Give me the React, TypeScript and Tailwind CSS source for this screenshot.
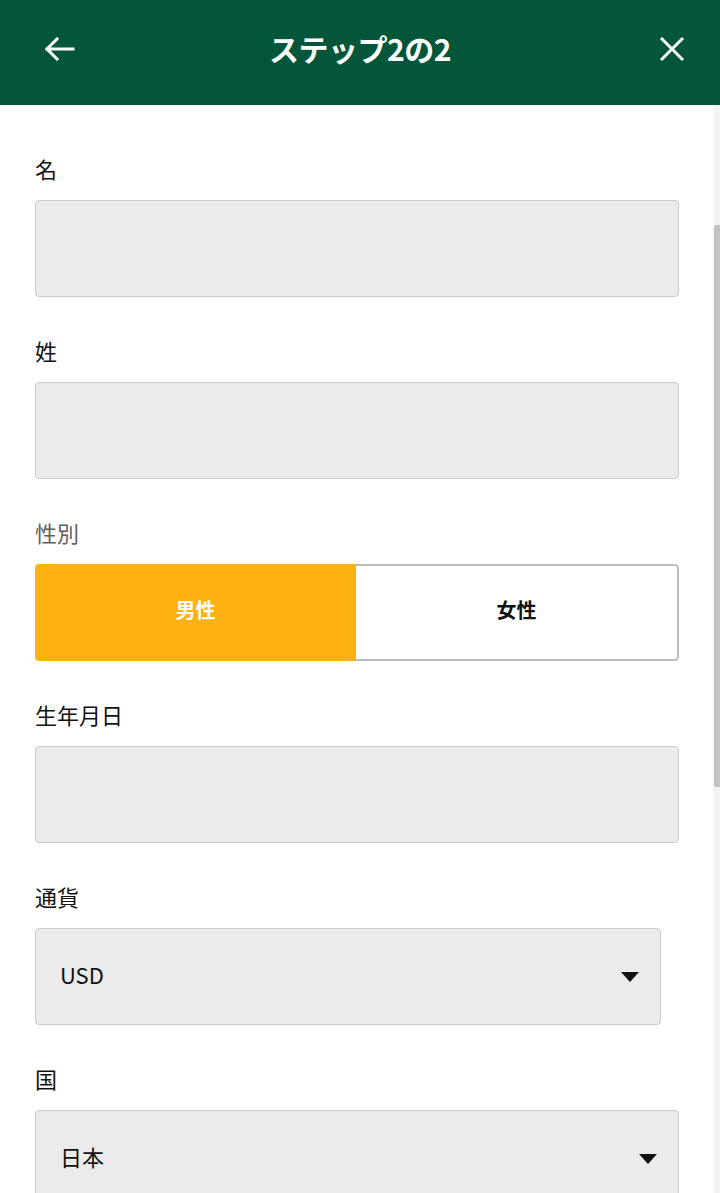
import type { ReactNode } from 'react';

const font = { fontFamily: '"Noto Sans CJK JP", "Noto Sans", sans-serif' };

function Field({ label, muted = false, children }: { label: string; muted?: boolean; children: ReactNode }) {
  return (
    <div className="mt-10 first:mt-0">
      <div className={`h-[30px] text-[22px] leading-[26px] ${muted ? 'text-[#5e5e5e]' : 'text-[#111]'}`}>{label}</div>
      <div className="mt-[15px]">{children}</div>
    </div>
  );
}

function TextBox() {
  return <div className="h-[97px] rounded-[4px] border border-[#cbcbcb] bg-[#ebebeb]" />;
}

function SelectBox({ value, className = '' }: { value: string; className?: string }) {
  return (
    <div className={`flex h-[97px] items-center justify-between rounded-[4px] border border-[#cbcbcb] bg-[#ebebeb] pl-6 pr-[21px] ${className}`}>
      <span className="pb-[4px] text-[22px] text-[#111]">{value}</span>
      <svg width="18" height="10" viewBox="0 0 18 10">
        <path d="M0 0h18L9 10z" fill="#111" />
      </svg>
    </div>
  );
}

export default function App() {
  return (
    <div className="flex h-[1193px] w-[720px] flex-col overflow-hidden bg-white" style={font}>
      {/* 上部バー */}
      <header className="grid h-[105px] shrink-0 grid-cols-[1fr_auto_1fr] items-center bg-[#03563a] pb-[8px] px-[35px] text-white">
        <svg className="ml-[9px]" width="32" height="24" viewBox="0 0 32 24" fill="none" stroke="white" strokeWidth="3" strokeLinecap="square">
          <path d="M3 12h26M13 2L3 12l10 10" />
        </svg>
        <h1 className="text-[30px] font-bold tracking-[-0.5px]">ステップ2の2</h1>
        <svg className="justify-self-end" width="26" height="26" viewBox="0 0 26 26" fill="none" stroke="white" strokeWidth="3">
          <path d="M2 2l22 22M24 2L2 24" />
        </svg>
      </header>

      <div className="flex min-h-0 flex-1">
        <main className="flex-1 px-[35px] pr-[34px] pt-[50px]">
          <Field label="名">
            <TextBox />
          </Field>
          <Field label="姓">
            <TextBox />
          </Field>
          <Field label="性別" muted>
            <div className="flex h-[97px] overflow-hidden rounded-[4px] text-[20px] font-bold">
              <button className="flex flex-1 items-center justify-center bg-[#fdb112] pb-[5px] text-white">男性</button>
              <button className="flex flex-1 items-center justify-center rounded-r-[4px] border-2 border-l-0 border-[#bdbdbd] bg-white pb-[5px] text-[#111]">
                女性
              </button>
            </div>
          </Field>
          <Field label="生年月日">
            <TextBox />
          </Field>
          <Field label="通貨">
            <SelectBox value="USD" className="mr-[18px]" />
          </Field>
          <Field label="国">
            <SelectBox value="日本" />
          </Field>
        </main>

        {/* スクロールバー */}
        <div className="w-[7px] shrink-0 bg-[#f4f4f4] pt-[120px]">
          <div className="ml-[1px] h-[562px] rounded-l-[2px] bg-[#c3c3c3]" />
        </div>
      </div>
    </div>
  );
}
